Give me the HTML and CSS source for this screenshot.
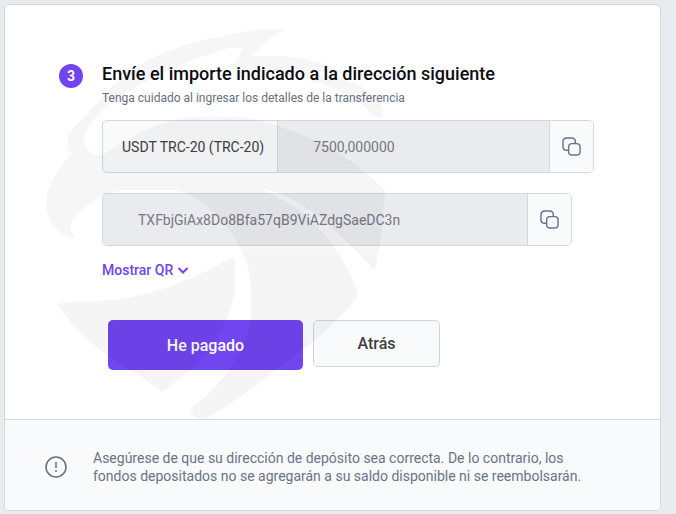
FILE: index.html
```html
<!DOCTYPE html>
<html lang="es">
<head>
<meta charset="utf-8">
<meta name="viewport" content="width=device-width, initial-scale=1">
<title>Depósito USDT</title>
<link rel="stylesheet" href="styles.css">
</head>
<body>
<main class="card">
  <section class="step">
    <span class="step-number">3</span>
    <form class="step-content">
      <h1 class="title">Envíe el importe indicado a la dirección siguiente</h1>
      <p class="subtitle">Tenga cuidado al ingresar los detalles de la transferencia</p>
      <div class="field">
        <label class="field-label" for="amount">USDT TRC-20 (TRC-20)</label>
        <input class="field-input" id="amount" type="text" value="7500,000000" readonly>
        <button class="copy" type="button" aria-label="Copiar importe">
          <svg class="copy-icon" viewBox="0 0 20 20"><path d="M7 14H5Q1 14 1 10V5Q1 1 5 1H10Q14 1 14 5V7"/><rect x="7" y="7" width="12" height="12" rx="3.5"/></svg>
        </button>
      </div>
      <div class="field field-address">
        <input class="field-input" type="text" value="TXFbjGiAx8Do8Bfa57qB9ViAZdgSaeDC3n" aria-label="Dirección" readonly>
        <button class="copy" type="button" aria-label="Copiar dirección">
          <svg class="copy-icon" viewBox="0 0 20 20"><path d="M7 14H5Q1 14 1 10V5Q1 1 5 1H10Q14 1 14 5V7"/><rect x="7" y="7" width="12" height="12" rx="3.5"/></svg>
        </button>
      </div>
      <button class="qr-toggle" type="button">Mostrar QR
        <svg class="chevron" viewBox="0 0 12 8"><path d="M1.5 2L6 6.500L10.500 2"/></svg>
      </button>
      <div class="actions">
        <button class="button primary" type="button">He pagado</button>
        <button class="button secondary" type="button">Atrás</button>
      </div>
    </form>
  </section>
  <footer class="notice">
    <svg class="notice-icon" viewBox="0 0 22 22"><circle cx="11" cy="11" r="10"/><path d="M11 6V12M11 14V16"/></svg>
    <p class="notice-text">Asegúrese de que su dirección de depósito sea correcta. De lo contrario, los fondos depositados no se agregarán a su saldo disponible ni se reembolsarán.</p>
  </footer>
  <svg class="watermark" viewBox="46 28 340 392" aria-hidden="true">
    <path d="M284 30C268 28 252 30 238 33C205 39 180 46 166 52C140 63 118 79 104 95C91 111 76 124 68 135V149L72 152C58 169 46 187 46 203C47 221 57 233 71 238L74 236L71 231V223C80 208 100 193 123 190H177C211 201 233 230 241 250C248 264 251 277 251 292V318C247 347 224 386 190 409L194 416L203 420C240 401 270 373 308 346C325 331 342 317 357 298V291C346 261 330 236 302 213C290 203 275 196 261 188C300 195 338 230 374 270C380 254 380 240 382 225L385 191C361 166 328 142 286 129C256 116 223 115 190 117C157 121 126 139 103 155H94C85 150 83 142 84 135C94 114 116 97 145 82C176 64 207 55 230 48H242L238 60L225 69C259 67 290 74 322 84C344 91 363 104 373 115L382 119V108C376 91 353 79 322 75L276 67L350 75C330 65 302 56 276 56H251C260 47 269 37 284 30Z"/>
    <path d="M58 306C58 302 64 303 72 302C137 303 178 286 232 258Q235 258 235 264V291C229 321 215 347 190 370L163 392L139 375C106 357 83 338 58 306Z"/>
  </svg>
</main>
</body>
</html>
```
FILE: styles.css
```css
* {
  box-sizing: border-box;
}

body {
  margin: 0;
  padding: 4px 15px 3px 4px;
  background: #eaebef;
  font-family: Roboto, "Liberation Sans", sans-serif;
  font-size: 14px;
  color: #404040;
}

button,
input {
  font: inherit;
  color: inherit;
}

button {
  cursor: pointer;
}

.card {
  position: relative;
  border: 1px solid #d6d7da;
  border-radius: 5px;
  background: #fff;
  overflow: hidden;
}

.step {
  display: flex;
  align-items: flex-start;
  gap: 19px;
  padding: 59px 66px 49px 54px;
}

.step-number {
  flex: none;
  width: 24px;
  border-radius: 50%;
  background: #7145f0;
  color: #fff;
  font-weight: 700;
  line-height: 24px;
  text-align: center;
}

.step-content {
  flex: 1;
  min-width: 0;
}

.title {
  margin: 0;
  color: #0c0d12;
  font-size: 18px;
  font-weight: 500;
  line-height: 20px;
}

.subtitle {
  margin: 4px 0 12px;
  color: #697180;
  font-size: 12px;
  line-height: 20px;
}

.field {
  display: flex;
  height: 53px;
  border: 1px solid #d6d7da;
  border-radius: 5px;
  background: #f9fafc;
  overflow: hidden;
}

.field-address {
  margin: 20px 22px 0 0;
}

.field-label {
  flex: none;
  padding: 0 13px 0 19px;
  border-right: 1px solid #d6d7da;
  line-height: 52px;
}

.field-input {
  flex: 1;
  min-width: 0;
  padding: 0 35px;
  border: 0;
  background: #eaebef;
  color: #777885;
  outline: 0;
}

.copy {
  display: flex;
  flex: none;
  align-items: center;
  justify-content: center;
  width: 44px;
  padding: 0;
  border: 0;
  border-left: 1px solid #d6d7da;
  background: #f9fafc;
}

.copy-icon {
  width: 19px;
  height: 19px;
  fill: none;
  stroke: #69708d;
  stroke-width: 1.5;
}

.qr-toggle {
  display: flex;
  align-items: center;
  gap: 4px;
  margin-top: 14px;
  padding: 0;
  border: 0;
  background: none;
  color: #7145f0;
  font-weight: 500;
  line-height: 20px;
}

.chevron {
  width: 12px;
  height: 8px;
  fill: none;
  stroke: currentColor;
  stroke-width: 2;
}

.actions {
  display: flex;
  align-items: flex-start;
  gap: 10px;
  margin: 40px 0 0 6px;
}

.button {
  padding: 0;
  border-radius: 5px;
  font-size: 16px;
  font-weight: 500;
}

.primary {
  width: 195px;
  height: 50px;
  border: 0;
  background: #7145f0;
  color: #fff;
}

.secondary {
  width: 127px;
  height: 47px;
  border: 1px solid #d0d3df;
  background: #f9fafc;
}

.notice {
  display: flex;
  align-items: center;
  gap: 26px;
  padding: 29px 66px 25px 40px;
  border-top: 1px solid #d6d7da;
  background: #f9fafc;
}

.notice-icon {
  flex: none;
  width: 22px;
  height: 22px;
  fill: none;
  stroke: #616f7c;
  stroke-width: 1.5;
}

.notice-text {
  margin: 0;
  color: #697386;
  line-height: 18px;
}

.watermark {
  position: absolute;
  top: 23px;
  left: 41px;
  width: 340px;
  height: 392px;
  fill: #000;
  opacity: 0.035;
  pointer-events: none;
}
```
